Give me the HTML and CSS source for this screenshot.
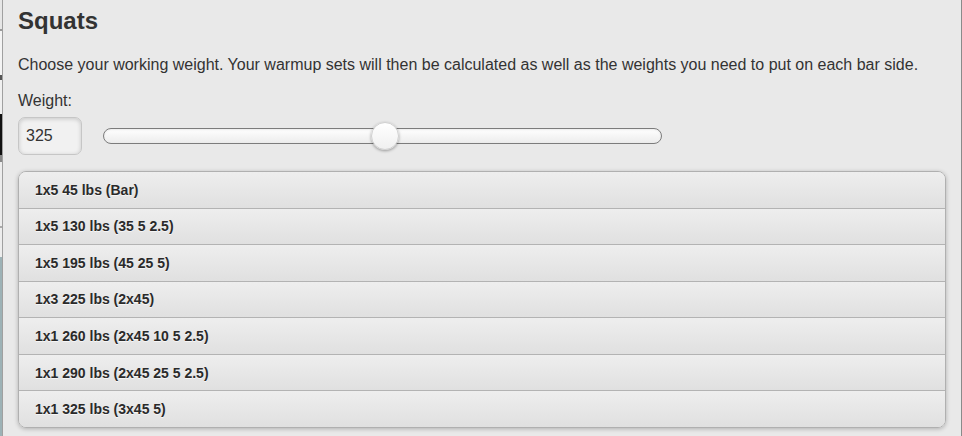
FILE: index.html
```html
<!DOCTYPE html>
<html>
<head>
<meta charset="utf-8">
<link rel="stylesheet" href="styles.css">
</head>
<body>
<div class="page">
  <div class="strip"></div>
  <div class="dialog">
    <h1 class="title">Squats</h1>
    <p class="intro">Choose your working weight. Your warmup sets will then be calculated as well as the weights you need to put on each bar side.</p>
    <label class="label" for="w">Weight:</label>
    <div class="weight-row">
      <input class="weight-input" id="w" type="text" value="325">
      <div class="track">
        <div class="thumb" style="left: 267px"></div>
      </div>
    </div>
    <ul class="sets">
      <li class="set">1x5 45 lbs (Bar)</li>
      <li class="set">1x5 130 lbs (35 5 2.5)</li>
      <li class="set">1x5 195 lbs (45 25 5)</li>
      <li class="set">1x3 225 lbs (2x45)</li>
      <li class="set">1x1 260 lbs (2x45 10 5 2.5)</li>
      <li class="set">1x1 290 lbs (2x45 25 5 2.5)</li>
      <li class="set">1x1 325 lbs (3x45 5)</li>
    </ul>
  </div>
</div>
</body>
</html>
```

FILE: styles.css
```css
html, body {
  margin: 0;
  padding: 0;
  background: #e9e9e9;
}
body {
  font-family: "Liberation Sans", Arial, sans-serif;
  color: #333;
}
.page {
  display: flex;
  width: 962px;
  height: 436px;
  overflow: hidden;
}
.strip {
  width: 2px;
  flex: none;
  background: linear-gradient(to bottom,
    #e6e6e6 0, #e6e6e6 29px, #9a9a9a 29px, #9a9a9a 31px,
    #f4f4f4 31px, #f4f4f4 75px, #555 75px, #555 80px,
    #f0f0f0 80px, #f0f0f0 114px, #111 114px, #111 155px,
    #888 155px, #888 162px, #ededed 162px, #ededed 226px,
    #aaa 226px, #aaa 228px, #ededed 228px, #ededed 257px,
    #9db2b6 257px, #9db2b6 100%);
}
.dialog {
  width: 928px;
  flex: none;
  padding: 0 15px;
  border-left: 1px solid #a0a0a0;
  border-right: 1px solid #8a8a8a;
  background: #e9e9e9;
}
.title {
  margin: 7px 0 0;
  font-size: 24px;
  line-height: 28px;
  font-weight: bold;
  color: #333;
}
.intro {
  margin: 19.5px 0 0;
  font-size: 16px;
  line-height: 20px;
  color: #333;
}
.label {
  display: block;
  margin-top: 16px;
  font-size: 16px;
  line-height: 20px;
  color: #333;
}
.weight-row {
  display: flex;
  align-items: center;
  gap: 21px;
  margin-top: 6.5px;
}
.weight-input {
  box-sizing: border-box;
  width: 64px;
  height: 38px;
  margin: 0;
  padding: 0 7px;
  font-family: "Liberation Sans", Arial, sans-serif;
  font-size: 16px;
  color: #333;
  border: 1px solid #c6c6c6;
  border-radius: 7px;
  background: #f1f1f1;
  box-shadow: inset 0 1px 4px rgba(0,0,0,0.18);
  outline: none;
}
.track {
  position: relative;
  box-sizing: border-box;
  width: 559px;
  height: 16px;
  border: 1px solid #7c7c7c;
  border-radius: 8px;
  background: linear-gradient(to bottom, #ffffff, #ececec);
  box-shadow: inset 0 1px 2px rgba(0,0,0,0.08);
}
.thumb {
  position: absolute;
  top: -7px;
  box-sizing: border-box;
  width: 28px;
  height: 28px;
  border-radius: 50%;
  border: 1px solid #d0d0d0;
  background: linear-gradient(to bottom, #ffffff, #f0f0f0);
  box-shadow: 0 1px 3px rgba(0,0,0,0.35);
}
.sets {
  list-style: none;
  margin: 16px 0 0;
  padding: 0;
  border: 1px solid #b0b0b0;
  border-radius: 8px;
  overflow: hidden;
  box-shadow: 0 1px 4px rgba(0,0,0,0.25);
}
.set {
  box-sizing: border-box;
  display: flex;
  align-items: center;
  height: 35.57px;
  padding: 0 16px;
  font-size: 14px;
  font-weight: bold;
  color: #2a2a2a;
  text-shadow: 0 1px 0 #f6f6f6;
  background: linear-gradient(to bottom, #eeeeee, #e0e0e0);
}
.set + .set {
  height: 36.57px;
  border-top: 1px solid #b3b3b3;
}
```
